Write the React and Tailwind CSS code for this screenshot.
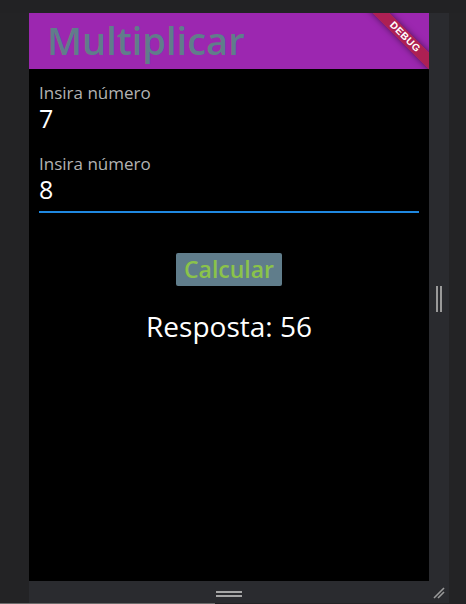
import React from 'react';

const font = { fontFamily: '"Open Sans", "Noto Sans", sans-serif' };

function DebugBanner() {
  return (
    <div className="absolute left-[326px] top-[18px] w-[100px] h-[12px] rotate-45 bg-[#b71c1c]/[0.63] shadow-[0_0_6px_rgba(0,0,0,0.5)] flex items-center justify-center">
      <span className="text-[10px] leading-none font-bold text-white tracking-[0.5px]" style={{ fontFamily: '"Liberation Sans", sans-serif' }}>
        DEBUG
      </span>
    </div>
  );
}

function Field({ label, value, focused }) {
  return (
    <div className="flex flex-col">
      <span className="text-[17px] leading-[20px] text-[#b3b3b3]">{label}</span>
      <span className="text-[25px] leading-[30px] text-white">{value}</span>
      <div className={focused ? 'mt-[7px] h-[2px] bg-[#1f88e0]' : 'mt-[7px] h-[2px]'} />
    </div>
  );
}

export default function App() {
  return (
    <div className="w-[466px] h-[604px] bg-[#232325] flex flex-col" style={font}>
      <div className="h-[13px] bg-[#222224]" />
      <div className="flex h-[568px]">
        <div className="w-[29px]" />
        <div className="w-[400px] h-[568px] bg-black relative overflow-hidden flex flex-col">
          <header className="h-[56px] bg-[#9c27b0] flex items-center pl-[18px]">
            <h1 className="text-[38px] leading-none font-semibold text-[#607d8b] pb-[2px]">Multiplicar</h1>
          </header>
          <div className="px-[10px] pt-[14px] flex flex-col gap-[12px]">
            <Field label="Insira número" value="7" />
            <Field label="Insira número" value="8" focused />
          </div>
          <div className="flex justify-center mt-[40px]">
            <button className="h-[33px] px-[8px] rounded-[2px] bg-[#607d8b] text-[#8bc34a] text-[23px] font-semibold leading-none">
              Calcular
            </button>
          </div>
          <p className="mt-[23px] text-center text-white text-[28px] leading-[34px]">Resposta: 56</p>
          <DebugBanner />
        </div>
        <div className="w-[20px] bg-[#2a2b2f] flex items-center justify-center gap-[2px] pt-[4px]">
          <div className="w-[2px] h-[26px] bg-[#9a9a9a]" />
          <div className="w-[2px] h-[26px] bg-[#9a9a9a]" />
        </div>
        <div className="w-[17px]" />
      </div>
      <div className="flex h-[22px]">
        <div className="w-[29px]" />
        <div className="w-[420px] bg-[#2a2b2f] relative flex">
          <div className="w-[400px] flex flex-col items-center pt-[10px] gap-[2px]">
            <div className="w-[26px] h-[2px] bg-[#a6a6a6]" />
            <div className="w-[26px] h-[2px] bg-[#a6a6a6]" />
          </div>
          <div className="flex-1 flex items-center justify-center pt-[2px]">
            <svg width="12" height="12" viewBox="0 0 12 12">
              <line x1="1" y1="11" x2="11" y2="1" stroke="#9a9a9a" strokeWidth="1.6" />
              <line x1="5" y1="11" x2="11" y2="5" stroke="#9a9a9a" strokeWidth="1.6" />
            </svg>
          </div>
        </div>
        <div className="w-[17px]" />
      </div>
      <div className="h-px flex">
        <div className="w-[215px] bg-[#6b6b6b]" />
      </div>
    </div>
  );
}
